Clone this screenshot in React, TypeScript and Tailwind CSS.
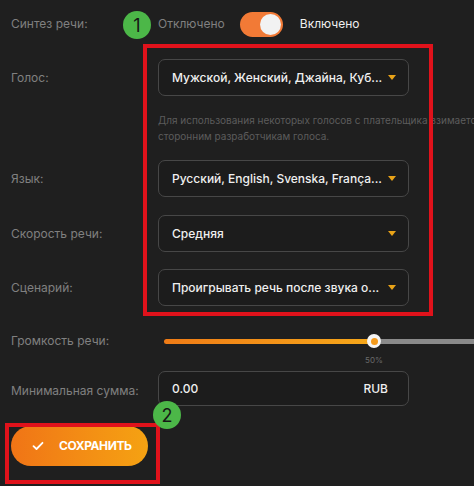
import React from "react";

const Arrow = () => (
  <svg width="8" height="5" viewBox="0 0 8 5" className="shrink-0">
    <path d="M0 0 L8 0 L4 5 Z" fill="#e9a318" />
  </svg>
);

const Select = ({ text }: { text: string }) => (
  <div className="flex h-[37px] w-[251px] items-center justify-between rounded-[7px] border border-[#474747] bg-[#1c1c1c] pl-[13px] pr-[12px]">
    <span className="whitespace-nowrap text-[12px] font-medium text-[#efefef]">{text}</span>
    <Arrow />
  </div>
);

const Label = ({ children }: { children: React.ReactNode }) => (
  <div className="w-[147px] shrink-0 text-[12px] text-[#808080]">{children}</div>
);

export default function App() {
  return (
    <div
      className="relative h-[486px] w-[474px] overflow-hidden bg-[#1f1f1f]"
      style={{ fontFamily: "Inter, 'Noto Sans', sans-serif" }}
    >
      <div className="flex flex-col pl-[11px] pt-[11px]">
        {/* Синтез речи */}
        <div className="flex h-[26px] items-center">
          <Label>Синтез речи:</Label>
          <span className="text-[12px] text-[#808080]">Отключено</span>
          <div className="ml-[15px] flex h-[25px] w-[43px] items-center justify-end rounded-full bg-[#f27a36] pr-[2px]">
            <div className="h-[21px] w-[21px] rounded-full bg-[#f2f2f2]" />
          </div>
          <span className="ml-[17px] text-[12px] text-[#efefef]">Включено</span>
        </div>

        {/* Голос */}
        <div className="mt-[22px] flex items-center">
          <Label>Голос:</Label>
          <Select text="Мужской, Женский, Джайна, Куб..." />
        </div>
        <div className="ml-[147px] mt-[16px] whitespace-nowrap text-[10px] leading-[16px] text-[#5c5c5c]">
          <div>Для использования некоторых голосов с плательщика взимается</div>
          <div>сторонним разработчикам голоса.</div>
        </div>

        {/* Язык */}
        <div className="mt-[16px] flex items-center">
          <Label>Язык:</Label>
          <Select text="Русский, English, Svenska, França..." />
        </div>

        {/* Скорость */}
        <div className="mt-[18px] flex items-center">
          <Label>Скорость речи:</Label>
          <Select text="Средняя" />
        </div>

        {/* Сценарий */}
        <div className="mt-[17px] flex items-center">
          <Label>Сценарий:</Label>
          <Select text="Проигрывать речь после звука о..." />
        </div>

        {/* Громкость */}
        <div className="mt-[28px] flex h-[14px] items-center">
          <Label>Громкость речи:</Label>
          <div className="relative ml-[6px] flex h-[14px] flex-1 items-center">
            <div className="h-[5px] w-[210px] rounded-l-full bg-gradient-to-r from-[#ef7b16] to-[#f6a81a]" />
            <div className="h-[5px] flex-1 bg-[#8a8a8a]" />
            <div className="absolute left-[203px] top-0 flex h-[14px] w-[14px] items-center justify-center rounded-full bg-[#f4f4f4]">
              <div className="h-[7px] w-[7px] rounded-full bg-[#f39a1c]" />
            </div>
          </div>
        </div>
        <div className="ml-[352px] mt-[7px] w-[22px] text-center text-[8px] leading-[10px] text-[#6a6a6a]">
          50%
        </div>

        {/* Минимальная сумма */}
        <div className="mt-[6px] flex items-center">
          <Label>
            <span className="relative top-[2px]">Минимальная сумма:</span>
          </Label>
          <div className="flex h-[35px] w-[251px] items-center justify-between rounded-[7px] border border-[#474747] bg-[#1c1c1c] pl-[13px] pr-[20px]">
            <span className="text-[12px] font-medium text-[#efefef]">0.00</span>
            <span className="text-[12px] font-medium text-[#efefef]">RUB</span>
          </div>
        </div>

        {/* Button */}
        <div className="mt-[20px] flex h-[40px] w-[137px] items-center rounded-full bg-gradient-to-r from-[#f07416] to-[#f5a212] pl-[21px]">
          <svg width="12" height="10" viewBox="0 0 12 10" className="shrink-0">
            <path d="M1.5 5.2 L4.5 8 L10.5 1.8" stroke="#fff" strokeWidth="1.8" fill="none" strokeLinecap="round" strokeLinejoin="round" />
          </svg>
          <span className="ml-[15px] text-[12px] font-bold tracking-[-0.4px] text-white">СОХРАНИТЬ</span>
        </div>
      </div>

      {/* Annotations */}
      <div className="pointer-events-none absolute left-[143px] top-[44px] h-[272px] w-[290px] border-[4px] border-[#e0121b]" />
      <div className="pointer-events-none absolute left-[5px] top-[423px] h-[61px] w-[155px] border-[4px] border-[#e0121b]" />
      <div className="absolute left-[123px] top-[11px] flex h-[28px] w-[28px] items-center justify-center rounded-full bg-[#4cb748] text-[18px] text-[#161616]">
        1
      </div>
      <div className="absolute left-[153px] top-[401px] flex h-[28px] w-[28px] items-center justify-center rounded-full bg-[#4cb748] text-[18px] text-[#161616]">
        2
      </div>
    </div>
  );
}
